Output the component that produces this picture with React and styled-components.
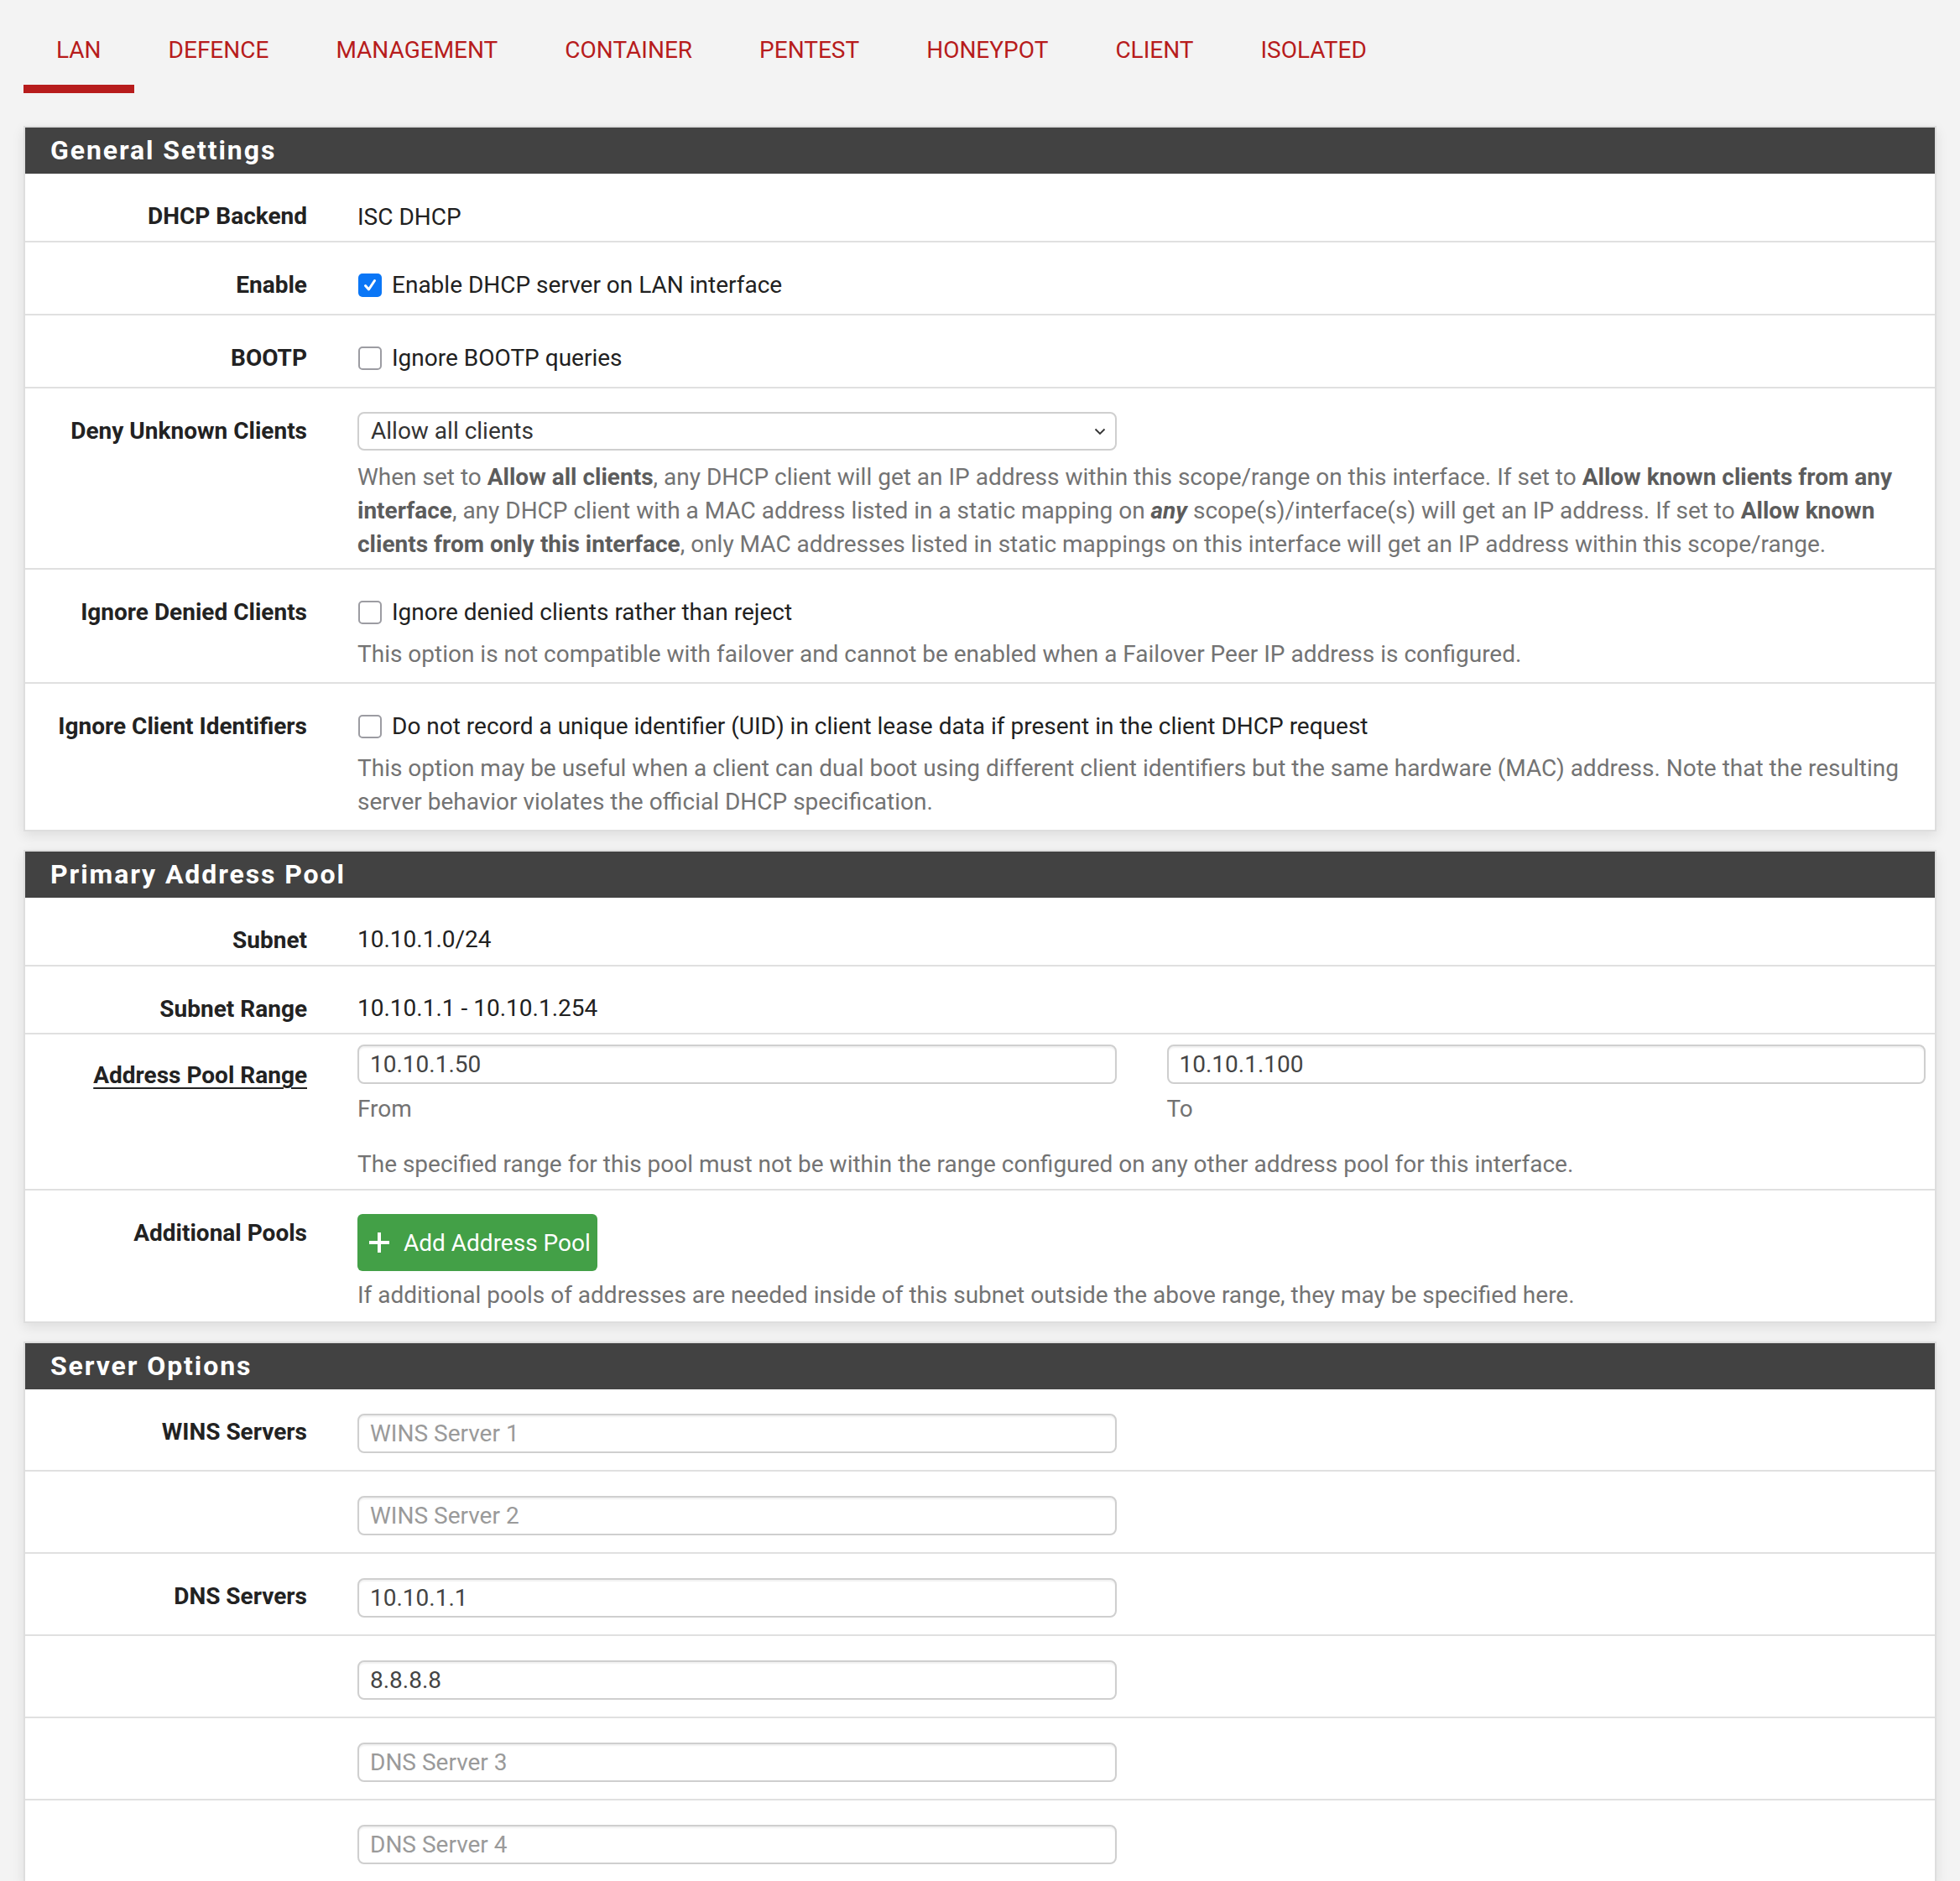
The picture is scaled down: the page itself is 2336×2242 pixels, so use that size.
import React from 'react'
import styled, { createGlobalStyle } from 'styled-components'

const GlobalStyle = createGlobalStyle`
  * { box-sizing: border-box; }
  html, body {
    margin: 0;
    padding: 0;
    background: #f3f3f3;
  }
  body {
    font-family: Roboto, "Noto Sans", sans-serif;
    font-size: 28px;
    line-height: 40px;
    color: #212121;
  }
`

const tabs = ['LAN', 'DEFENCE', 'MANAGEMENT', 'CONTAINER', 'PENTEST', 'HONEYPOT', 'CLIENT', 'ISOLATED']

const App = () => {
    return (
        <Page>
            <GlobalStyle />
            <TabBar>
                {tabs.map((t, i) => (
                    <Tab key={t} $active={i === 0}>{t}</Tab>
                ))}
            </TabBar>

            <Panel>
                <PanelHeading>General Settings</PanelHeading>
                <Row $pb={8}>
                    <Label>DHCP Backend</Label>
                    <Static>ISC DHCP</Static>
                </Row>
                <Row>
                    <Label>Enable</Label>
                    <div>
                        <CheckLine><Check checked />Enable DHCP server on LAN interface</CheckLine>
                    </div>
                </Row>
                <Row>
                    <Label>BOOTP</Label>
                    <div>
                        <CheckLine><Check />Ignore BOOTP queries</CheckLine>
                    </div>
                </Row>
                <Row $pb={8}>
                    <Label>Deny Unknown Clients</Label>
                    <div>
                        <SelectBox>
                            <span>Allow all clients</span>
                            <svg width="14" height="9" viewBox="0 0 14 9">
                                <path d="M1.5 1.5l5.5 5.5 5.5-5.5" fill="none" stroke="#333" strokeWidth="1.8" />
                            </svg>
                        </SelectBox>
                        <Help $gap={12}>
                            When set to <b>Allow all clients</b>, any DHCP client will get an IP address within this scope/range on this interface. If set to <b>Allow known clients from any interface</b>, any DHCP client with a MAC address listed in a static mapping on <b><i>any</i></b> scope(s)/interface(s) will get an IP address. If set to <b>Allow known clients from only this interface</b>, only MAC addresses listed in static mappings on this interface will get an IP address within this scope/range.
                        </Help>
                    </div>
                </Row>
                <Row $pb={13}>
                    <Label>Ignore Denied Clients</Label>
                    <div>
                        <CheckLine><Check />Ignore denied clients rather than reject</CheckLine>
                        <Help>This option is not compatible with failover and cannot be enabled when a Failover Peer IP address is configured.</Help>
                    </div>
                </Row>
                <Row $pb={13}>
                    <Label>Ignore Client Identifiers</Label>
                    <div>
                        <CheckLine><Check />Do not record a unique identifier (UID) in client lease data if present in the client DHCP request</CheckLine>
                        <Help>This option may be useful when a client can dual boot using different client identifiers but the same hardware (MAC) address. Note that the resulting server behavior violates the official DHCP specification.</Help>
                    </div>
                </Row>
            </Panel>

            <Panel>
                <PanelHeading>Primary Address Pool</PanelHeading>
                <Row $pb={9}>
                    <Label>Subnet</Label>
                    <Static $pt={16}>10.10.1.0/24</Static>
                </Row>
                <Row $pb={8}>
                    <Label>Subnet Range</Label>
                    <Static $pt={16}>10.10.1.1 - 10.10.1.254</Static>
                </Row>
                <Row $pt={12} $pb={9}>
                    <Label $link>Address Pool Range</Label>
                    <div>
                        <PairGrid>
                            <div>
                                <TextInput defaultValue="10.10.1.50" readOnly />
                                <SubLabel>From</SubLabel>
                            </div>
                            <div>
                                <TextInput defaultValue="10.10.1.100" readOnly />
                                <SubLabel>To</SubLabel>
                            </div>
                        </PairGrid>
                        <Help $gap={26}>The specified range for this pool must not be within the range configured on any other address pool for this interface.</Help>
                    </div>
                </Row>
                <Row $pb={11}>
                    <Label>Additional Pools</Label>
                    <div>
                        <AddButton>
                            <svg width="28" height="28" viewBox="0 0 28 28">
                                <path d="M14 2v24M2 14h24" stroke="#fff" strokeWidth="4" />
                            </svg>
                            Add Address Pool
                        </AddButton>
                        <Help $gap={9}>If additional pools of addresses are needed inside of this subnet outside the above range, they may be specified here.</Help>
                    </div>
                </Row>
            </Panel>

            <Panel>
                <PanelHeading>Server Options</PanelHeading>
                <Row $pb={20}>
                    <Label>WINS Servers</Label>
                    <Field><TextInput placeholder="WINS Server 1" /></Field>
                </Row>
                <Row $pb={20}>
                    <Label />
                    <Field><TextInput placeholder="WINS Server 2" /></Field>
                </Row>
                <Row $pb={20}>
                    <Label>DNS Servers</Label>
                    <Field><TextInput defaultValue="10.10.1.1" readOnly /></Field>
                </Row>
                <Row $pb={20}>
                    <Label />
                    <Field><TextInput defaultValue="8.8.8.8" readOnly /></Field>
                </Row>
                <Row $pb={20}>
                    <Label />
                    <Field><TextInput placeholder="DNS Server 3" /></Field>
                </Row>
                <Row $pb={20}>
                    <Label />
                    <Field><TextInput placeholder="DNS Server 4" /></Field>
                </Row>
            </Panel>
        </Page>
    )
}

const Check = ({ checked }) => (
    <CheckBox $checked={checked}>
        {checked && (
            <svg width="28" height="28" viewBox="0 0 28 28">
                <path d="M8.5 14.5l4 4.5 7-10.5" fill="none" stroke="#fff" strokeWidth="3" strokeLinecap="round" strokeLinejoin="round" />
            </svg>
        )}
    </CheckBox>
)

export default App

const Page = styled.div`
padding: 20px 28px 0;
`

const TabBar = styled.nav`
display: flex;
margin-bottom: 39px;
`

const Tab = styled.a`
display: block;
margin-right: 2px;
padding: 20px 39px 21px;
border-bottom: 10px solid ${p => (p.$active ? '#b71c1c' : 'transparent')};
color: #b71c1c;
font-size: 28px;
line-height: 40px;
text-transform: uppercase;
cursor: pointer;
`

const Panel = styled.section`
background: #fff;
border: 2px solid #dedede;
box-shadow: 0 5px 14px rgba(0, 0, 0, 0.09);
margin-bottom: 22px;
`

const PanelHeading = styled.h2`
margin: 0;
padding: 10px 30px;
background: #424242;
color: #fff;
font-size: 32px;
line-height: 35px;
font-weight: 700;
letter-spacing: 1.9px;
`

const Row = styled.div`
display: grid;
grid-template-columns: 336px 1fr;
column-gap: 60px;
padding: ${p => p.$pt ?? 14}px 11px ${p => p.$pb ?? 12}px 0;
border-bottom: 2px solid #e0e0e0;

&:last-child {
    border-bottom: none;
}
`

const Label = styled.div`
padding-top: 17px;
text-align: right;
font-weight: 700;
color: #222;

${p => p.$link && `
    text-decoration: underline;
    text-decoration-thickness: 2px;
    text-underline-offset: 5px;
`}
`

const Static = styled.div`
padding-top: ${p => p.$pt ?? 18}px;
`

const CheckLine = styled.label`
display: flex;
align-items: center;
gap: 12px;
padding: 17px 0 2px;
`

const CheckBox = styled.span`
flex: none;
display: flex;
width: 28px;
height: 28px;
margin-left: 1px;
border-radius: 5px;
border: ${p => (p.$checked ? 'none' : '2px solid #9c9ca2')};
background: ${p => (p.$checked ? '#0a76f6' : '#fff')};
`

const Help = styled.p`
margin: ${p => p.$gap ?? 8}px 0 0;
color: #737373;

b {
    color: #5c5c5c;
}
`

const SelectBox = styled.div`
display: flex;
align-items: center;
justify-content: space-between;
width: calc(50% - 30px);
height: 46px;
margin-top: 14px;
padding: 0 11px 0 14px;
border: 2px solid #cfcfcf;
border-radius: 8px;
background: #fff;
color: #333;
`

const Field = styled.div`
padding-top: 15px;

input {
    width: calc(50% - 30px);
}
`

const TextInput = styled.input`
display: block;
width: 100%;
height: 47px;
padding: 0 13px;
border: 2px solid #cfcfcf;
border-radius: 8px;
box-shadow: inset 0 2px 2px rgba(0, 0, 0, 0.06);
background: #fff;
font-family: Roboto, "Noto Sans", sans-serif;
font-size: 28px;
color: #444;
outline: none;

&::placeholder {
    color: #9a9a9a;
}
`

const PairGrid = styled.div`
display: grid;
grid-template-columns: 1fr 1fr;
column-gap: 60px;
`

const SubLabel = styled.div`
margin-top: 10px;
color: #737373;
`

const AddButton = styled.button`
display: inline-flex;
align-items: center;
gap: 15px;
height: 68px;
margin-top: 14px;
padding: 0 8px 0 12px;
border: none;
border-radius: 6px;
background: #43a047;
color: #fff;
font-family: Roboto, "Noto Sans", sans-serif;
font-size: 28px;
cursor: pointer;
`
